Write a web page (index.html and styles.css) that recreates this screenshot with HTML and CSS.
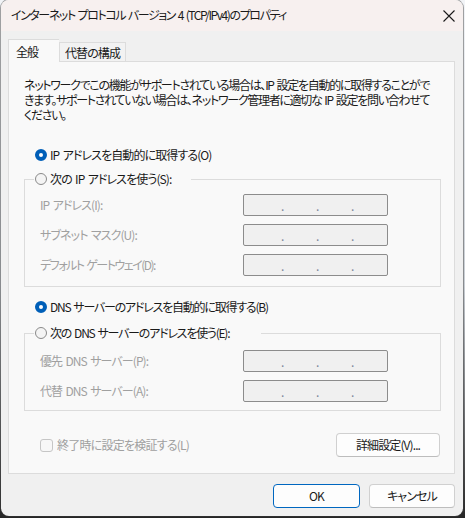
FILE: index.html
```html
<!DOCTYPE html>
<html lang="ja">
<head>
<meta charset="utf-8">
<title>インターネット プロトコル バージョン 4 (TCP/IPv4)のプロパティ</title>
<link rel="stylesheet" href="styles.css">
</head>
<body>
<div class="window">
  <div class="titlebar">
    <span class="title">インターネット プロトコル バージョン 4 (TCP/IPv4)のプロパティ</span>
    <span class="close">
      <svg width="12" height="12" viewBox="0 0 12 12"><path d="M0.5 0.5 L11.5 11.5 M11.5 0.5 L0.5 11.5" stroke="#1a1a1a" stroke-width="1.1" fill="none"/></svg>
    </span>
  </div>
  <div class="content">
    <div class="tabs">
      <div class="tab active">全般</div>
      <div class="tab">代替の構成</div>
    </div>
    <div class="panel">
      <p class="desc">ネットワークでこの機能がサポートされている場合は、IP 設定を自動的に取得することがで<br>きます。サポートされていない場合は、ネットワーク管理者に適切な IP 設定を問い合わせて<br>ください。</p>

      <div class="radio-row first"><span class="radio checked"></span><span>IP アドレスを自動的に取得する(O)</span></div>
      <fieldset class="group g1">
        <legend class="legend l1"><span class="radio"></span><span>次の IP アドレスを使う(S):</span></legend>
        <div class="field"><span class="lbl">IP アドレス(I):</span><span class="ip"><span class="dot">.</span><span class="dot">.</span><span class="dot">.</span></span></div>
        <div class="field"><span class="lbl">サブネット マスク(U):</span><span class="ip"><span class="dot">.</span><span class="dot">.</span><span class="dot">.</span></span></div>
        <div class="field"><span class="lbl tight">デフォルト ゲートウェイ(D):</span><span class="ip"><span class="dot">.</span><span class="dot">.</span><span class="dot">.</span></span></div>
      </fieldset>

      <div class="radio-row second"><span class="radio checked"></span><span class="semi">DNS サーバーのアドレスを自動的に取得する(B)</span></div>
      <fieldset class="group g2">
        <legend class="legend l2"><span class="radio"></span><span class="semi">次の DNS サーバーのアドレスを使う(E):</span></legend>
        <div class="field"><span class="lbl">優先 DNS サーバー(P):</span><span class="ip"><span class="dot">.</span><span class="dot">.</span><span class="dot">.</span></span></div>
        <div class="field"><span class="lbl">代替 DNS サーバー(A):</span><span class="ip"><span class="dot">.</span><span class="dot">.</span><span class="dot">.</span></span></div>
      </fieldset>

      <div class="bottom-row">
        <label class="check"><span class="box"></span><span class="loose">終了時に設定を検証する(L)</span></label>
        <button class="btn adv">詳細設定(V)...</button>
      </div>
    </div>
    <div class="footer">
      <button class="btn ok">OK</button>
      <button class="btn">キャンセル</button>
    </div>
  </div>
</div>
</body>
</html>
```
FILE: styles.css
```css
html, body {
  margin: 0;
  padding: 0;
}
body {
  width: 465px;
  height: 518px;
  background: linear-gradient(to bottom, #f2f4f7 0%, #c8cdd3 55%, #262626 100%);
  font-family: "Noto Sans CJK JP", "Noto Sans", sans-serif;
  font-size: 12px;
  font-feature-settings: "palt";
  letter-spacing: -0.9px;
  word-spacing: 1.5px;
  color: #1a1a1a;
  overflow: hidden;
}
.tight { letter-spacing: -1.5px; }
.semi { letter-spacing: -1.22px; }
.loose { letter-spacing: -0.78px; }
.window {
  margin-left: 1px;
  width: 462px;
  height: 516px;
  border-radius: 8px;
  overflow: hidden;
  background: #f0f0f0;
  box-shadow: 0 0 0 1px rgba(60, 60, 60, 0.45);
  display: flex;
  flex-direction: column;
}
.titlebar {
  height: 31px;
  flex: none;
  background: #f7f0ef;
  display: flex;
  align-items: center;
  justify-content: space-between;
  padding: 0 7px 0 10px;
}
.title {
  line-height: 16px;
  color: #1a1a1a;
  letter-spacing: -1.42px;
  margin-top: -1px;
}
.close {
  width: 12px;
  height: 12px;
  margin-right: 1px;
  display: flex;
}
.content {
  padding: 8px 8px 0 7px;
  display: flex;
  flex-direction: column;
}
.tabs {
  display: flex;
  align-items: flex-end;
  height: 22px;
  position: relative;
  z-index: 1;
}
.tab {
  height: 19px;
  box-sizing: border-box;
  border: 1px solid #dcdcdc;
  border-bottom: none;
  background: #f2f2f2;
  line-height: 17px;
  padding: 1px 4px 0 5px;
  margin-bottom: 0;
}
.tab.active {
  width: 51px;
  height: 23px;
  margin-bottom: -1px;
  background: #f9f9f9;
  padding: 2px 0 0 7px;
  line-height: 19px;
  border-right: none;
}
.tab.active + .tab {
  width: 67px;
  border-left: 1px solid #dcdcdc;
}
.panel {
  height: 413px;
  box-sizing: border-box;
  border: 1px solid #dcdcdc;
  background: #f9f9f9;
  padding: 15px 13px 0 15px;
}
.desc {
  margin: 0;
  line-height: 15px;
  white-space: nowrap;
  letter-spacing: -1.3px;
}
.radio-row {
  display: flex;
  align-items: center;
  height: 16px;
  line-height: 16px;
  margin-left: 11px;
}
.radio-row.first { margin-top: 25px; }
.radio-row.second { margin-top: 12px; }
.radio {
  width: 12px;
  height: 12px;
  box-sizing: border-box;
  border-radius: 50%;
  border: 1px solid #8a8a8a;
  background: #f4f4f4;
  margin-right: 3px;
  flex: none;
}
.radio.checked {
  border: 4px solid #005fb8;
  background: #ffffff;
}
.group {
  margin: 8px 0 0 0;
  border: 1px solid #dcdcdc;
  border-radius: 0;
  padding: 7px 0 10px 15px;
  min-width: 0;
}
.group.g2 {
  margin-top: 10px;
  padding-top: 9px;
  padding-bottom: 8px;
}
.legend {
  display: flex;
  align-items: center;
  height: 16px;
  line-height: 16px;
  padding: 0 0 0 1px;
  margin-left: -6px;
  box-sizing: border-box;
  white-space: nowrap;
}
.legend.l1 { width: 157px; }
.legend.l2 { width: 227px; }
.field {
  display: grid;
  grid-template-columns: 203px 145px;
  align-items: center;
  height: 22px;
}
.field + .field {
  margin-top: 8px;
}
.lbl {
  color: #a0a0a0;
  line-height: 16px;
  white-space: nowrap;
}
.ip {
  height: 22px;
  box-sizing: border-box;
  border: 1px solid #8c8c8c;
  border-radius: 2px;
  background: #f0f0f0;
  display: flex;
  align-items: flex-end;
  padding: 0 0 4px 37px;
  gap: 32px;
}
.dot {
  width: 3px;
  line-height: 10px;
  color: #7a8598;
  font-size: 12px;
  letter-spacing: 0;
}
.bottom-row {
  margin-top: 22px;
  display: flex;
  align-items: center;
  justify-content: space-between;
  padding-left: 16px;
  padding-right: 1px;
}
.check {
  display: flex;
  align-items: center;
  color: #a0a0a0;
  line-height: 16px;
}
.box {
  width: 13px;
  height: 13px;
  box-sizing: border-box;
  border: 1px solid #c6c6c6;
  border-radius: 3px;
  background: #f7f7f7;
  margin-right: 4px;
}
.btn {
  font-family: inherit;
  font-size: 12px;
  font-feature-settings: "palt";
  letter-spacing: -0.9px;
  color: #1a1a1a;
  background: #fdfdfd;
  border: 1px solid #d0d0d0;
  border-bottom-color: #bdbdbd;
  border-radius: 4px;
  height: 24px;
  padding: 0;
  line-height: 20px;
  width: 86px;
}
.btn.adv {
  width: 104px;
  height: 24px;
}
.footer {
  display: flex;
  justify-content: flex-end;
  gap: 9px;
  padding-top: 10px;
}
.btn.ok {
  border: 1px solid #0067c0;
  width: 87px;
}
```
